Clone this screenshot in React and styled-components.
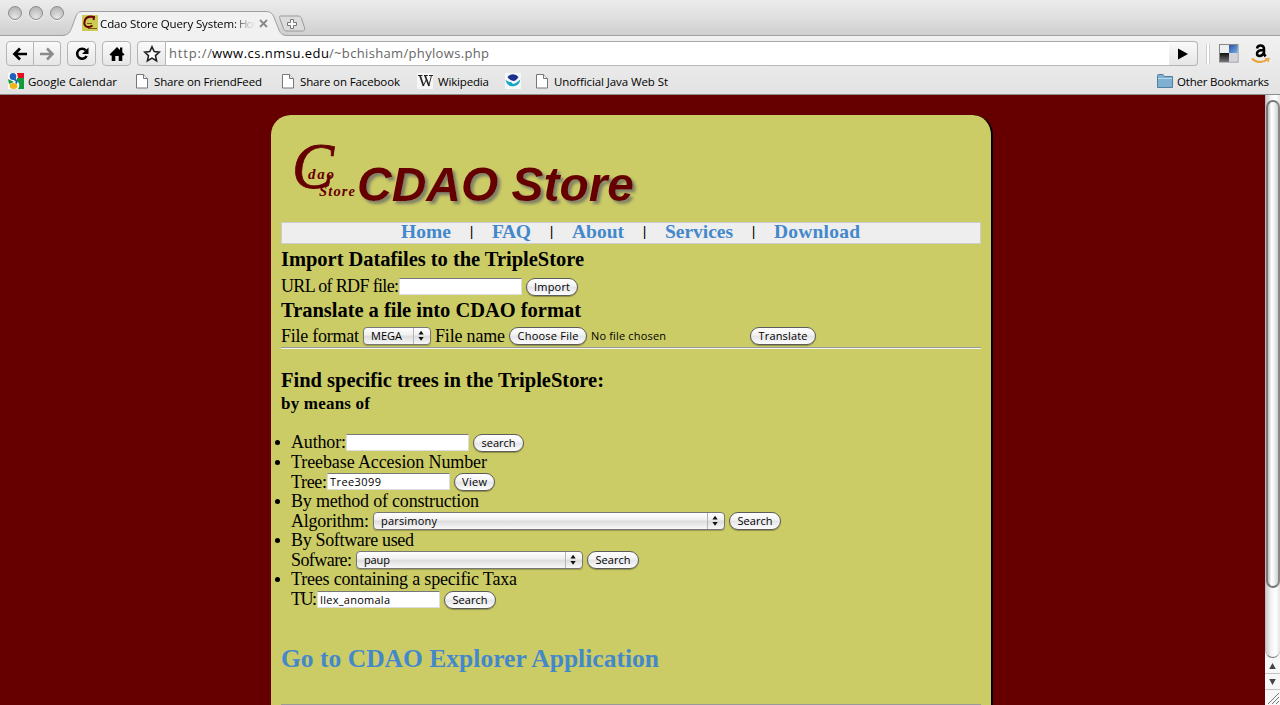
import React, { useLayoutEffect, useRef } from "react";
import styled, { createGlobalStyle } from "styled-components";

const Global = createGlobalStyle`
  * { box-sizing: border-box; }
  html, body { margin: 0; padding: 0; overflow: hidden; }
  body { font-family: "Open Sans", "Noto Sans", sans-serif; font-size: 11px; color: #000; }
`;

const serif = `"Liberation Serif", serif`;
const sans = `"Open Sans", "Noto Sans", sans-serif`;

/* Text tracked so that it fills a given width exactly */
const FitBox = styled.span`
  display: inline-block;
  flex: none;
  width: ${(p) => p.$w}px;
  white-space: pre;
`;
function Fit({ w, children }) {
  const ref = useRef(null);
  useLayoutEffect(() => {
    const el = ref.current;
    el.style.letterSpacing = "0px";
    const natural = el.getBoundingClientRect().width;
    el.style.letterSpacing = (w - natural) / Math.max(1, children.length - 1) + "px";
  }, [w, children]);
  return (
    <FitBox $w={w}>
      <span ref={ref}>{children}</span>
    </FitBox>
  );
}

const Window = styled.div`
  width: 1280px;
  height: 705px;
  display: flex;
  flex-direction: column;
  overflow: hidden;
  background: #660000;
`;

/* ---------- browser chrome ---------- */
const TabStrip = styled.div`
  height: 36px;
  flex: none;
  display: flex;
  background: linear-gradient(#ececec, #e2e2e2 40%, #cfcfcf);
  border-bottom: 1px solid #a2a2a2;
`;
const Lights = styled.div`
  display: flex;
  gap: 7px;
  padding: 6px 0 0 8px;
  width: 62px;
`;
const Light = styled.span`
  width: 14px;
  height: 14px;
  flex: none;
  border-radius: 50%;
  border: 1px solid #8b8b8b;
  background: radial-gradient(circle at 50% 85%, #e6e6e6, #c6c6c6 55%, #acacac);
  box-shadow: 0 1px 0 #f6f6f6;
`;
const Tab = styled.div`
  position: relative;
  width: 217px;
  height: 36px;
  flex: none;
  display: flex;
  align-items: center;
  padding: 10px 0 0 20px;
  font-size: 11.5px;
`;
const TabShape = styled.svg`
  position: absolute;
  left: 0;
  top: 0;
`;
const TabContent = styled.div`
  position: relative;
  display: flex;
  align-items: center;
  height: 18px;
`;
const TabTitle = styled.div`
  width: 155px;
  margin: 0 4px 0 2px;
  display: flex;
  overflow: hidden;
  mask-image: linear-gradient(90deg, #000 134px, rgba(0, 0, 0, 0.35) 144px, transparent 155px);
`;
const NewTab = styled.svg`
  margin-top: 15px;
  flex: none;
`;

const Toolbar = styled.div`
  height: 34px;
  flex: none;
  display: flex;
  align-items: center;
  padding: 1px 10px 0 6px;
  background: linear-gradient(#f1f1f1, #e9e9e9);
`;
const ToolButton = styled.div`
  width: ${(p) => p.$w}px;
  height: 25px;
  flex: none;
  display: flex;
  align-items: center;
  justify-content: center;
  margin-right: ${(p) => p.$mr || 0}px;
  border: 1px solid #b5b5b5;
  border-left-width: ${(p) => (p.$join === "right" ? 0 : 1)}px;
  border-radius: ${(p) => (p.$join === "left" ? "4px 0 0 4px" : p.$join === "right" ? "0 4px 4px 0" : "4px")};
  background: linear-gradient(#fafafa, #e6e6e6);
`;
const Address = styled.div`
  flex: 1;
  height: 25px;
  display: flex;
  align-items: center;
  padding: 0 0 1px 3px;
  background: #fff;
  border-top: 1px solid #a9a9a9;
  border-bottom: 1px solid #b9b9b9;
  font-size: 13px;
  color: #666;
`;
const Host = styled.span`
  color: #000;
`;
const Separator = styled.span`
  width: 4px;
  height: 20px;
  margin: 0 9px 0 8px;
  border-left: 1px solid #cfcfcf;
  border-right: 1px solid #cfcfcf;
  background: #fff;
`;

const Bookmarks = styled.div`
  height: 25px;
  flex: none;
  display: flex;
  align-items: center;
  padding: 0 11px 2px 8px;
  background: linear-gradient(#e9e9e9, #e2e2e2);
  border-bottom: 1px solid #8e8e8e;
  font-size: 11.5px;
`;
const Bookmark = styled.div`
  display: flex;
  align-items: center;
  height: 18px;
  gap: ${(p) => p.$gap || 0}px;
  margin-right: ${(p) => p.$mr || 0}px;
`;
const Grow = styled.span`
  flex: 1;
`;

/* ---------- page ---------- */
const Viewport = styled.div`
  flex: 1;
  min-height: 0;
  display: flex;
  overflow: hidden;
`;
const Page = styled.div`
  flex: 1;
  padding: 20px 0 0 271px;
  background: #660000;
`;
const Panel = styled.main`
  width: 722px;
  height: 640px;
  padding: 0 10px;
  background: #cccc66;
  border-right: 2px solid #000;
  border-radius: 20px 20px 0 0;
  font-family: ${serif};
  font-size: 18px;
`;
const Banner = styled.header`
  height: 107px;
  display: flex;
  padding: 27px 0 0 12px;
`;
const Nav = styled.nav`
  height: 22px;
  width: 700px;
  display: flex;
  align-items: center;
  padding: 0 0 2px 119px;
  background: #eee;
  border: 1px solid #ccc;
  font-size: 19.5px;
  font-weight: bold;
  color: #4488cc;
`;
const Bar = styled.span`
  width: 41px;
  margin-top: -3px;
  text-align: center;
  color: #000;
  font: 600 13px ${sans};
`;
const Heading = styled.h3`
  height: ${(p) => p.$h}px;
  margin: ${(p) => p.$mt || 0}px 0 0;
  display: flex;
  align-items: center;
  font-size: ${(p) => p.$size || 20.5}px;
  font-weight: bold;
  line-height: 20px;
  color: ${(p) => p.$color || "#000"};
`;
const Row = styled.div`
  height: ${(p) => p.$h}px;
  padding-top: ${(p) => p.$pt || 0}px;
  display: flex;
  align-items: center;
  line-height: 18px;
`;
const Rule = styled.div`
  height: 2px;
  border-top: 1px solid #999;
  border-bottom: 1px solid #f4f4f4;
`;
const LastRule = styled(Rule)`
  margin-top: 30px;
`;
const List = styled.ul`
  list-style: none;
  margin: 16px 0 0 -7px;
  padding: 0;
`;
const Item = styled.li`
  display: flex;
`;
const Bullet = styled.span`
  width: 5px;
  height: 5px;
  flex: none;
  margin: 8px 11px 0 1px;
  border-radius: 50%;
  background: #000;
`;
const Field = styled.span`
  width: 123px;
  height: 17px;
  flex: none;
  display: flex;
  align-items: center;
  margin: 0 4px 0 0;
  padding-left: 2px;
  background: #fff;
  border: 1px solid #ddd;
  border-top-color: #777;
  font: 11px/15px ${sans};
`;
const Push = styled.button`
  width: ${(p) => p.$w}px;
  height: 18px;
  flex: none;
  display: flex;
  align-items: center;
  justify-content: center;
  margin: 1px 0 0;
  padding: 0;
  border: 1px solid #5c5c5c;
  border-radius: 9px;
  background: linear-gradient(#fff, #f2f2f2 45%, #e4e4e8 50%, #fdfdfd);
  box-shadow: 0 1px 1px rgba(0, 0, 0, 0.3);
  font: 11px/16px ${sans};
  color: #000;
`;
const SelectBox = styled.span`
  width: ${(p) => p.$w}px;
  height: 18px;
  flex: none;
  display: flex;
  align-items: center;
  margin: 1px 4px 0;
  padding-left: 7px;
  border: 1px solid #777;
  border-radius: 4px;
  background: linear-gradient(#fff, #efefef 45%, #dcdcdc 50%, #f8f8f8);
  box-shadow: 0 1px 1px rgba(0, 0, 0, 0.25);
  font: 11px/16px ${sans};
`;
const Arrows = styled.svg`
  margin-left: auto;
  border-left: 1px solid #b5b5b5;
`;
const Status = styled.span`
  width: 159px;
  margin: 1px 0 0 4px;
  font: 11px/16px ${sans};
`;
const Spacer = styled.span`
  width: 4px;
  flex: none;
`;

/* ---------- scrollbar ---------- */
const Scroll = styled.div`
  width: 15px;
  flex: none;
  display: flex;
  flex-direction: column;
  background: #f3f3f3;
`;
const Track = styled.div`
  height: 563px;
  padding-top: 5px;
  border-left: 1px solid #bbb;
  border-radius: 0 0 8px 8px;
  border-bottom: 1px solid #777;
  background: linear-gradient(90deg, #ccc, #f2f2f2 35%, #fff 70%, #e4e4e4);
`;
const Thumb = styled.div`
  height: 488px;
  border: 2px solid #777;
  border-right-color: #888;
  border-radius: 7px;
  background: linear-gradient(90deg, #bbb, #fff 35%, #f2f2f2 60%, #d0d0d0);
`;
const ScrollEnd = styled.svg`
  display: block;
  flex: none;
`;

function Select({ w, tw, children }) {
  return (
    <SelectBox $w={w}>
      <Fit w={tw}>{children}</Fit>
      <Arrows width="17" height="16" viewBox="0 0 17 16">
        <path d="M7.500 2.500 L10.300 6.500 H4.700 Z M7.500 13 L10.300 9 H4.700 Z" fill="#111" />
      </Arrows>
    </SelectBox>
  );
}

function Button({ w, tw, children }) {
  return (
    <Push $w={w}>
      <Fit w={tw}>{children}</Fit>
    </Push>
  );
}

const DocIcon = () => (
  <svg width="12" height="15" viewBox="0 0 12 15">
    <path d="M.5 .5 H7.500 L11.500 4.500 V14 H.5 Z" fill="#fff" stroke="#777" />
    <path d="M7.500 .5 V4.500 H11.500" fill="#eee" stroke="#777" />
  </svg>
);

function Chrome() {
  return (
    <>
      <TabStrip>
        <Lights>
          <Light />
          <Light />
          <Light />
        </Lights>
        <Tab>
          <TabShape width="230" height="36" viewBox="0 0 230 36">
            <path
              d="M0 36 C7 35 8 32 10 27 L14 16 C15.500 12.500 17 11.500 20 11.500 H204 C208 11.500 210 13 211.500 16 L217 30 C218.500 34 221 35.500 226 36 Z"
              fill="#f1f1f1"
            />
            <path
              d="M0 35.500 C7 35 8 32 10 27 L14 16 C15.500 12.500 17 11.500 20 11.500 H204 C208 11.500 210 13 211.500 16 L217 30 C218.500 34 221 35.500 226 35.500"
              fill="none"
              stroke="#a0a0a0"
            />
          </TabShape>
          <TabContent>
            <svg width="16" height="16" viewBox="0 0 16 16">
              <rect width="16" height="16" fill="#cccc55" />
              <path d="M11.500 5 L12 2 Q5 .5 3 5 Q1 11 5.500 12 Q8 12.500 10.500 10.500" fill="none" stroke="#660000" strokeWidth="2" />
              <path d="M5 8.500 H10 M6 13.500 H15" stroke="#85501f" strokeWidth="1" />
            </svg>
            <TabTitle>
              <Fit w={137}>Cdao Store Query System:</Fit>
              <Fit w={26}> Hom</Fit>
            </TabTitle>
            <svg width="9" height="9" viewBox="0 0 9 9">
              <path d="M1 1 L8 8 M8 1 L1 8" stroke="#888" strokeWidth="1.800" />
            </svg>
          </TabContent>
        </Tab>
        <NewTab width="28" height="19" viewBox="0 0 28 19">
          <path d="M1.500 1 H19 C21 1 22 2 22.500 3.500 L25.500 12.500 C26 15 25 16 23.500 16 H8 C6 16 5 15 4.500 13.500 L.8 3.500 C.3 2 .5 1 1.500 1 Z" fill="#dcdcdc" stroke="#999" />
          <path d="M11.500 4.500 h3 v3 h3 v3 h-3 v3 h-3 v-3 h-3 v-3 h3 Z" fill="#f8f8f8" stroke="#777" />
        </NewTab>
      </TabStrip>

      <Toolbar>
        <ToolButton $w={28} $join="left">
          <svg width="16" height="14" viewBox="0 0 16 14">
            <path d="M15 7 H3 M8 1.500 L2.500 7 L8 12.500" fill="none" stroke="#000" strokeWidth="2.700" />
          </svg>
        </ToolButton>
        <ToolButton $w={27} $join="right" $mr={6}>
          <svg width="16" height="14" viewBox="0 0 16 14">
            <path d="M1 7 H13 M8 1.500 L13.500 7 L8 12.500" fill="none" stroke="#8a8a8a" strokeWidth="2.500" />
          </svg>
        </ToolButton>
        <ToolButton $w={29} $mr={6}>
          <svg width="16" height="16" viewBox="0 0 16 16">
            <path d="M11.800 4.300 A5 5 0 1 0 12.600 10" fill="none" stroke="#000" strokeWidth="2.600" />
            <path d="M14.500 1.500 V8 H8 Z" fill="#000" />
          </svg>
        </ToolButton>
        <ToolButton $w={29} $mr={6}>
          <svg width="16" height="16" viewBox="0 0 16 16">
            <path d="M8 1 L11 4 V1.500 H13.300 V6.200 L15.500 8.500 L14.500 9.500 H13.300 V15 H9.700 V10 H6.300 V15 H2.700 V9.500 H1.500 L.5 8.500 Z" fill="#000" />
          </svg>
        </ToolButton>
        <ToolButton $w={29} $join="left">
          <svg width="18" height="18" viewBox="0 0 18 18">
            <path d="M9 1.800 L11.200 6.600 L16.300 7.100 L12.500 10.600 L13.600 15.800 L9 13.100 L4.400 15.800 L5.500 10.600 L1.700 7.100 L6.800 6.600 Z" fill="#fff" stroke="#222" strokeWidth="1.600" />
          </svg>
        </ToolButton>
        <Address>
          <Fit w={43}>http://</Fit>
          <Host>
            <Fit w={117}>www.cs.nmsu.edu</Fit>
          </Host>
          <Fit w={160}>/~bchisham/phylows.php</Fit>
        </Address>
        <ToolButton $w={29} $join="right">
          <svg width="12" height="12" viewBox="0 0 12 12">
            <path d="M1 .5 L11 6 L1 11.500 Z" fill="#000" />
          </svg>
        </ToolButton>
        <Separator />
        <svg width="20" height="19" viewBox="0 0 20 19">
          <defs>
            <linearGradient id="dk" x1="0" y1="0" x2="0" y2="1">
              <stop offset="0" stopColor="#111" />
              <stop offset="1" stopColor="#777" />
            </linearGradient>
            <linearGradient id="bl" x1="0" y1="0" x2="1" y2="1">
              <stop offset="0" stopColor="#2d4f9c" />
              <stop offset="1" stopColor="#6fb0ea" />
            </linearGradient>
          </defs>
          <rect x=".5" y=".5" width="18.500" height="17.500" fill="#eee" stroke="#888" />
          <rect x="1" y="9" width="9" height="9" fill="url(#dk)" />
          <rect x="10" y="1" width="8.500" height="8" fill="url(#bl)" />
          <rect x="10" y="9" width="8.500" height="8.500" fill="#d3d3dc" />
        </svg>
        <svg width="31" height="22" viewBox="0 0 31 22">
          <path
            d="M18 5.500 Q18.500 2.500 21.500 2.500 Q25 2.500 25 6 V11 L26.500 13.500 M25 7 Q18 6.800 18 10.500 Q18 13 20.500 13 Q23.500 13 25 9.500"
            fill="none"
            stroke="#000"
            strokeWidth="2.500"
          />
          <path d="M13 15.500 C17 20 24 20 28.500 16.500" fill="none" stroke="#e9a53c" strokeWidth="2.200" />
          <path d="M26 15.800 L30 15.500 L29 19" fill="none" stroke="#e9a53c" strokeWidth="1.300" />
        </svg>
      </Toolbar>

      <Bookmarks>
        <Bookmark $gap={4} $mr={19}>
          <svg width="16" height="16" viewBox="0 0 16 16">
            <rect width="16" height="16" fill="#fff" />
            <path d="M9 0 H16 V5 H10 Z" fill="#e1121b" />
            <path d="M9 5 H16 V16 H10 Q13 11 9 8 Z" fill="#139a3a" />
            <path d="M0 6 L6 9 L1 11 Z" fill="#139a3a" />
            <ellipse cx="5" cy="3.500" rx="3.300" ry="3.500" fill="#1f5fbf" />
            <ellipse cx="5.500" cy="13" rx="4" ry="3" fill="#f2b41c" />
            <path d="M6 6 Q10 8 8 10.500" stroke="#1f5fbf" strokeWidth="2" fill="none" />
          </svg>
          <Fit w={89}>Google Calendar</Fit>
        </Bookmark>
        <Bookmark $gap={6} $mr={20}>
          <DocIcon />
          <Fit w={108}>Share on FriendFeed</Fit>
        </Bookmark>
        <Bookmark $gap={6} $mr={17}>
          <DocIcon />
          <Fit w={100}>Share on Facebook</Fit>
        </Bookmark>
        <Bookmark $gap={4} $mr={16}>
          <svg width="17" height="16" viewBox="0 0 17 16">
            <rect width="16" height="16" fill="#f6f6f6" />
            <path d="M1 2.500 H5.500 M7 2.500 H10.800 M12 2.500 H16" fill="none" stroke="#222" strokeWidth="1" />
            <path d="M3 2.500 L6.500 13 M8 2.500 L12 13" fill="none" stroke="#222" strokeWidth="1.700" />
            <path d="M14.500 2.500 L11.800 13 M9.300 6.500 L6.300 13" fill="none" stroke="#222" strokeWidth=".9" />
          </svg>
          <Fit w={51}>Wikipedia</Fit>
        </Bookmark>
        <Bookmark $mr={15}>
          <svg width="16" height="16" viewBox="0 0 16 16">
            <rect width="16" height="16" fill="#f4f8fa" />
            <path d="M2.500 4 A7 7 0 0 1 13.500 4 Q11 8 8.500 8 Q4.500 7.500 2.500 4 Z" fill="#1b2f8f" />
            <path d="M.7 7 Q4 9.500 6 9 L8 11 Q11 10.500 15.300 6.500 A7.500 7.500 0 0 1 .7 8 Z" fill="#12a5c4" />
          </svg>
        </Bookmark>
        <Bookmark $gap={6}>
          <DocIcon />
          <Fit w={114}>Unofficial Java Web St</Fit>
        </Bookmark>
        <Grow />
        <Bookmark $gap={4}>
          <svg width="16" height="14" viewBox="0 0 16 14">
            <path d="M.5 13.500 V1.500 Q.5 .5 1.500 .5 H6 L7.500 2.500 H15.500 V13.500 Z" fill="#7fb0d2" stroke="#4f7fa3" />
            <path d="M1 4.500 H15" stroke="#b4d6ea" />
          </svg>
          <Fit w={92}>Other Bookmarks</Fit>
        </Bookmark>
      </Bookmarks>
    </>
  );
}

function Logo() {
  return (
    <svg width="360" height="72" viewBox="0 0 360 72">
      <defs>
        <filter id="sh" x="-5%" y="-10%" width="112%" height="135%">
          <feDropShadow dx="3" dy="3" stdDeviation="1.500" floodColor="#666" floodOpacity=".75" />
        </filter>
      </defs>
      <g fill="#660000" fontFamily="Liberation Serif" fontStyle="italic">
        <text x="-1" y="46" fontSize="66" stroke="#660000" strokeWidth=".8" textLength="42" lengthAdjust="spacingAndGlyphs">C</text>
        <text x="15" y="36.500" fontSize="15" fontWeight="bold" textLength="26">dao</text>
        <text x="26" y="54" fontSize="14.500" fontWeight="bold" textLength="36">Store</text>
      </g>
      <text
        x="64"
        y="59"
        fontFamily="Liberation Sans"
        fontStyle="italic"
        fontWeight="bold"
        fontSize="48"
        textLength="277"
        fill="#660000"
        filter="url(#sh)"
      >
        CDAO Store
      </text>
    </svg>
  );
}

export default function App() {
  return (
    <Window>
      <Global />
      <Chrome />
      <Viewport>
        <Page>
          <Panel>
            <Banner>
              <Logo />
            </Banner>
            <Nav>
              <Fit w={50}>Home</Fit>
              <Bar>|</Bar>
              <Fit w={39}>FAQ</Fit>
              <Bar>|</Bar>
              <Fit w={52}>About</Fit>
              <Bar>|</Bar>
              <Fit w={68}>Services</Fit>
              <Bar>|</Bar>
              <Fit w={86}>Download</Fit>
            </Nav>
            <Heading $h={30}>
              <Fit w={303}>Import Datafiles to the TripleStore</Fit>
            </Heading>
            <Row $h={24}>
              <Fit w={118}>URL of RDF file:</Fit>
              <Field />
              <Button w={52} tw={36}>Import</Button>
            </Row>
            <Heading $h={24}>
              <Fit w={300}>Translate a file into CDAO format</Fit>
            </Heading>
            <Row $h={25} $pt={2}>
              <Fit w={78}>File format</Fit>
              <Select w={68} tw={31}>MEGA</Select>
              <Fit w={70}>File name</Fit>
              <Spacer />
              <Button w={78} tw={61}>Choose File</Button>
              <Status>
                <Fit w={75}>No file chosen</Fit>
              </Status>
              <Button w={66} tw={49}>Translate</Button>
            </Row>
            <Rule />
            <Heading $h={24} $mt={19}>
              <Fit w={323}>Find specific trees in the TripleStore:</Fit>
            </Heading>
            <Heading $h={24} $size={17}>
              <Fit w={89}>by means of</Fit>
            </Heading>
            <List>
              <Item>
                <Bullet />
                <Row $h={20}>
                  <Fit w={55}>Author:</Fit>
                  <Field />
                  <Button w={51} tw={34}>search</Button>
                </Row>
              </Item>
              <Item>
                <Bullet />
                <div>
                  <Row $h={20}>
                    <Fit w={196}>Treebase Accesion Number</Fit>
                  </Row>
                  <Row $h={19}>
                    <Fit w={36}>Tree:</Fit>
                    <Field>
                      <Fit w={51}>Tree3099</Fit>
                    </Field>
                    <Button w={41} tw={25}>View</Button>
                  </Row>
                </div>
              </Item>
              <Item>
                <Bullet />
                <div>
                  <Row $h={20}>
                    <Fit w={188}>By method of construction</Fit>
                  </Row>
                  <Row $h={19}>
                    <Fit w={78}>Algorithm:</Fit>
                    <Select w={352} tw={56}>parsimony</Select>
                    <Button w={52} tw={35}>Search</Button>
                  </Row>
                </div>
              </Item>
              <Item>
                <Bullet />
                <div>
                  <Row $h={20}>
                    <Fit w={123}>By Software used</Fit>
                  </Row>
                  <Row $h={19}>
                    <Fit w={61}>Sofware:</Fit>
                    <Select w={227} tw={26}>paup</Select>
                    <Button w={52} tw={35}>Search</Button>
                  </Row>
                </div>
              </Item>
              <Item>
                <Bullet />
                <div>
                  <Row $h={20}>
                    <Fit w={226}>Trees containing a specific Taxa</Fit>
                  </Row>
                  <Row $h={20}>
                    <Fit w={26}>TU:</Fit>
                    <Field>
                      <Fit w={70}>Ilex_anomala</Fit>
                    </Field>
                    <Button w={52} tw={35}>Search</Button>
                  </Row>
                </div>
              </Item>
            </List>
            <Heading $h={30} $mt={35} $size={25.5} $color="#4488cc">
              <Fit w={378}>Go to CDAO Explorer Application</Fit>
            </Heading>
            <LastRule />
          </Panel>
        </Page>
        <Scroll>
          <Track>
            <Thumb />
          </Track>
          <ScrollEnd width="15" height="47" viewBox="0 0 15 47">
            <rect width="15" height="47" fill="#f7f7f7" />
            <path d="M0 15.500 H15 M0 31.500 H15" stroke="#c4c4c4" />
            <path d="M7.500 5 L10.800 11 H4.200 Z M7.500 27 L10.800 21 H4.200 Z" fill="#444" />
            <path d="M3 46 L14 35 M7 46 L14 39 M11 46 L14 43" stroke="#777" />
          </ScrollEnd>
        </Scroll>
      </Viewport>
    </Window>
  );
}
